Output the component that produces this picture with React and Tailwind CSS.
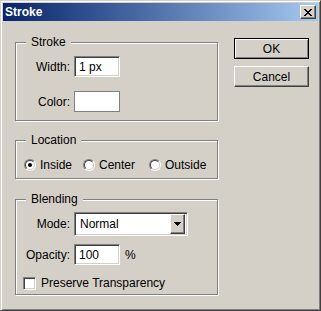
import React from 'react';

const raised = 'border border-t-white border-l-white border-r-[#404040] border-b-[#404040] shadow-[inset_-1px_-1px_0_#808080]';
const sunken = 'border border-t-[#808080] border-l-[#808080] border-r-white border-b-white shadow-[inset_1px_1px_0_#404040,inset_-1px_-1px_0_#d4d0c8] bg-white';
const group = 'relative border border-[#808080] shadow-[1px_1px_0_#fff,inset_1px_1px_0_#fff]';

function GroupLabel({ children }) {
  return (
    <span className="absolute left-[10px] top-[-8px] px-[5px] bg-[#d4d0c8] leading-[14px]">{children}</span>
  );
}

function Radio({ checked, label, width }) {
  return (
    <label className="flex items-center h-[14px]" style={width ? { width } : undefined}>
      <span className="w-3 h-3 rounded-full border border-t-[#808080] border-l-[#808080] border-r-white border-b-white flex items-center justify-center shrink-0">
        <span className="w-[10px] h-[10px] rounded-full border border-t-[#404040] border-l-[#404040] border-r-[#d4d0c8] border-b-[#d4d0c8] bg-white flex items-center justify-center">
          {checked && <span className="w-1 h-1 rounded-full bg-black" />}
        </span>
      </span>
      <span className="ml-[4px] leading-[14px]">{label}</span>
    </label>
  );
}

function Field({ label, children }) {
  return (
    <div className="flex items-center">
      <span className="w-[54px] text-right leading-[14px]">{label}</span>
      <div className="ml-[4px] flex items-center">{children}</div>
    </div>
  );
}

export default function App() {
  return (
    <div className="w-[321px] h-[311px] bg-[#d4d0c8] border border-t-[#d4d0c8] border-l-[#d4d0c8] border-r-[#404040] border-b-[#404040] shadow-[inset_1px_1px_0_#fff,inset_-1px_-1px_0_#808080] p-[2px] text-[12px] text-black font-['Liberation_Sans',Arial,sans-serif] select-none">
      {/* title bar */}
      <div className="h-[18px] flex items-center justify-between pl-[2px] pr-[2px] bg-gradient-to-r from-[#0a246a] to-[#a6caf0]">
        <span className="text-white font-bold leading-[14px]">Stroke</span>
        <button className={`w-[16px] h-[14px] bg-[#d4d0c8] flex items-center justify-center ${raised}`}>
          <svg width="8" height="7" viewBox="0 0 8 7" shapeRendering="crispEdges">
            <path d="M0 0h2v1H0zM6 0h2v1H6zM1 1h2v1H1zM5 1h2v1H5zM2 2h4v1H2zM3 3h2v1H3zM2 4h4v1H2zM1 5h2v1H1zM5 5h2v1H5zM0 6h2v1H0zM6 6h2v1H6z" fill="#000" />
          </svg>
        </button>
      </div>

      <div className="flex">
        {/* left column */}
        <div className="ml-[12px] mt-[21px] w-[203px] flex flex-col">
          <div className={`${group} h-[79px] pt-[13px]`}>
            <GroupLabel>Stroke</GroupLabel>
            <Field label="Width:">
              <div className={`w-[46px] h-[21px] flex items-center pl-[4px] ${sunken}`}>
                <span className="leading-[14px]">1 px</span>
              </div>
            </Field>
            <div className="h-[14px]" />
            <Field label="Color:">
              <div className="w-[46px] h-[21px] border border-[#808080] bg-white" />
            </Field>
          </div>

          <div className={`${group} mt-[19px] h-[39px] pt-[17px] pl-[8px]`}>
            <GroupLabel>Location</GroupLabel>
            <div className="flex">
              <Radio checked label="Inside" width={59} />
              <Radio label="Center" width={66} />
              <Radio label="Outside" />
            </div>
          </div>

          <div className={`${group} mt-[20px] h-[96px] pt-[12px]`}>
            <GroupLabel>Blending</GroupLabel>
            <Field label="Mode:">
              <div className={`w-[114px] h-[24px] flex items-center justify-between pl-[5px] pr-[2px] ${sunken}`}>
                <span className="leading-[14px]">Normal</span>
                <span className={`w-[15px] h-[20px] bg-[#d4d0c8] flex items-center justify-center ${raised}`}>
                  <svg width="7" height="4" viewBox="0 0 7 4" shapeRendering="crispEdges">
                    <path d="M0 0h7v1H0zM1 1h5v1H1zM2 2h3v1H2zM3 3h1v1H3z" fill="#000" />
                  </svg>
                </span>
              </div>
            </Field>
            <div className="h-[8px]" />
            <Field label="Opacity:">
              <div className={`w-[46px] h-[21px] flex items-center pl-[4px] ${sunken}`}>
                <span className="leading-[14px]">100</span>
              </div>
              <span className="ml-[5px] leading-[14px]">%</span>
            </Field>
            <label className="mt-[11px] ml-[7px] flex items-center">
              <span className={`w-[13px] h-[13px] ${sunken}`} />
              <span className="ml-[5px] leading-[14px]">Preserve Transparency</span>
            </label>
          </div>
        </div>

        {/* right column */}
        <div className="ml-[16px] mt-[17px] flex flex-col gap-[7px]">
          <button className="w-[75px] h-[21px] bg-[#d4d0c8] border border-black shadow-[inset_1px_1px_0_#fff,inset_-1px_-1px_0_#808080] leading-[14px]">OK</button>
          <button className={`w-[75px] h-[21px] bg-[#d4d0c8] leading-[14px] ${raised}`}>Cancel</button>
        </div>
      </div>
    </div>
  );
}
